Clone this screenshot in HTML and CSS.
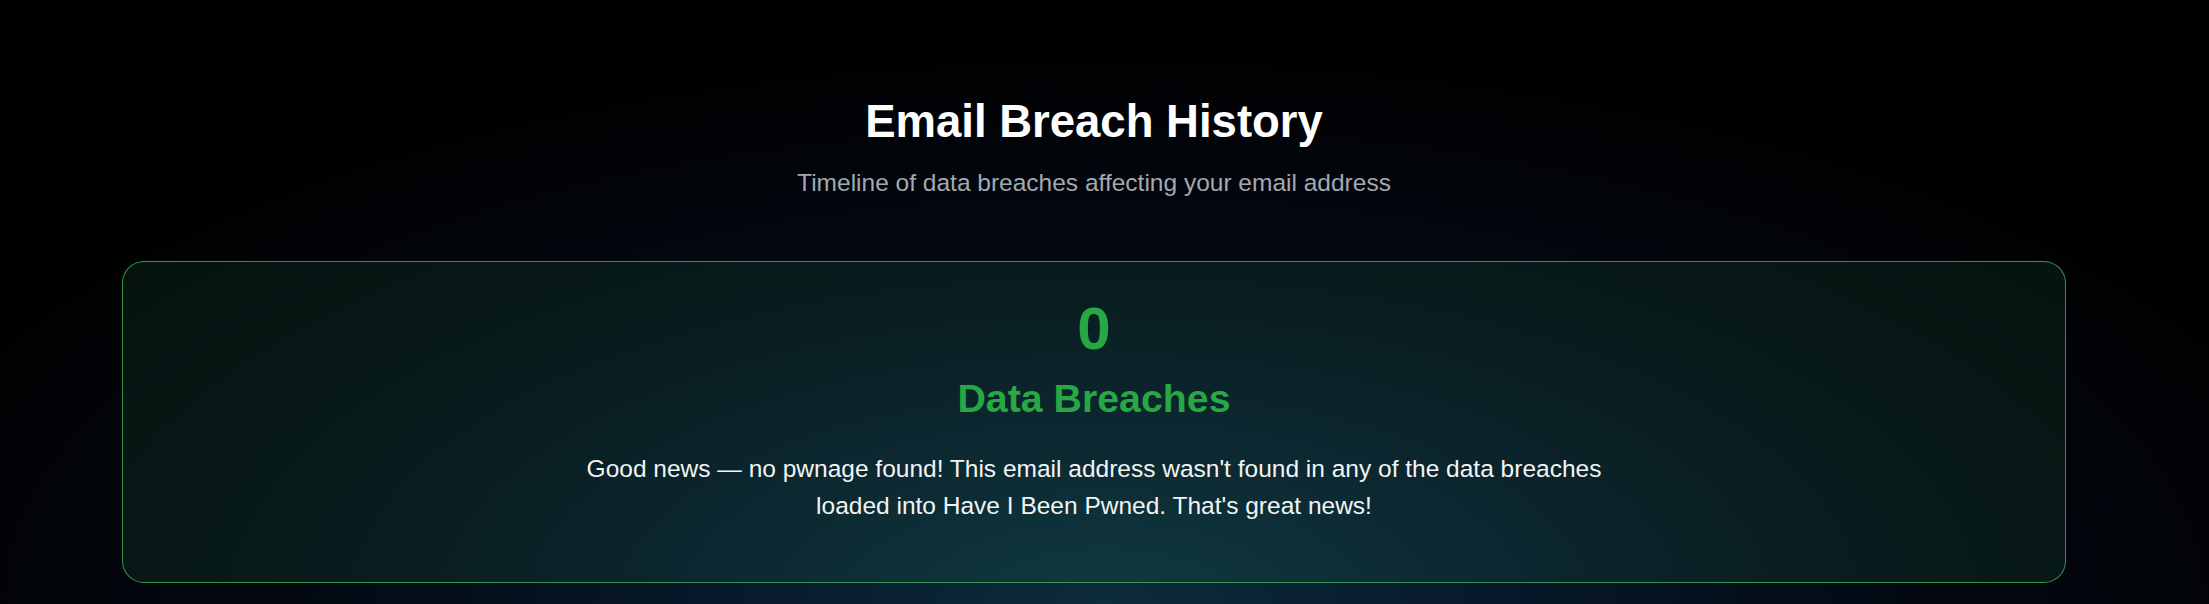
FILE: index.html
```html
<!DOCTYPE html>
<html lang="en">
<head>
<meta charset="utf-8">
<title>Email Breach History</title>
<link rel="stylesheet" href="styles.css">
</head>
<body>
<main class="page">
  <header class="page-header">
    <h1 class="page-title">Email Breach History</h1>
    <p class="page-subtitle">Timeline of data breaches affecting your email address</p>
  </header>
  <section class="result-card">
    <div class="result-count">0</div>
    <h2 class="result-label">Data Breaches</h2>
    <p class="result-text">Good news — no pwnage found! This email address wasn't found in any of the data breaches loaded into Have I Been Pwned. That's great news!</p>
  </section>
</main>
</body>
</html>
```
FILE: styles.css
```css
html, body {
  margin: 0;
  padding: 0;
  height: 100%;
}

body {
  min-height: 100vh;
  font-family: "Liberation Sans", Arial, sans-serif;
  color: #ffffff;
  background-color: #000;
  background-image: radial-gradient(ellipse 60% 95% at 50% 100%, #0d2c3c 0%, #07182a 30%, #030811 62%, #000000 100%);
  overflow: hidden;
}

.page {
  padding: 95px 143px 0 122px;
  box-sizing: border-box;
}

.page-header {
  display: flex;
  flex-direction: column;
  align-items: center;
  text-align: center;
}

.page-title {
  margin: 0;
  font-size: 45.5px;
  line-height: 54px;
  font-weight: 700;
  color: #ffffff;
}

.page-subtitle {
  margin: 19px 0 0;
  font-size: 24.5px;
  line-height: 30px;
  color: #a3a9b0;
}

.result-card {
  margin-top: 63px;
  border: 1px solid rgba(56, 170, 80, 0.85);
  border-radius: 22px;
  background: rgba(50, 160, 100, 0.12);
  padding: 34px 40px 58px;
  display: flex;
  flex-direction: column;
  align-items: center;
  text-align: center;
}

.result-count {
  font-size: 60px;
  line-height: 66px;
  font-weight: 700;
  color: #28a745;
}

.result-label {
  margin: 13px 0 0;
  font-size: 39.3px;
  line-height: 46px;
  font-weight: 700;
  color: #28a745;
}

.result-text {
  margin: 30px 0 0;
  max-width: 1050px;
  font-size: 24.5px;
  line-height: 36.5px;
  color: #f2f4f5;
}
```
